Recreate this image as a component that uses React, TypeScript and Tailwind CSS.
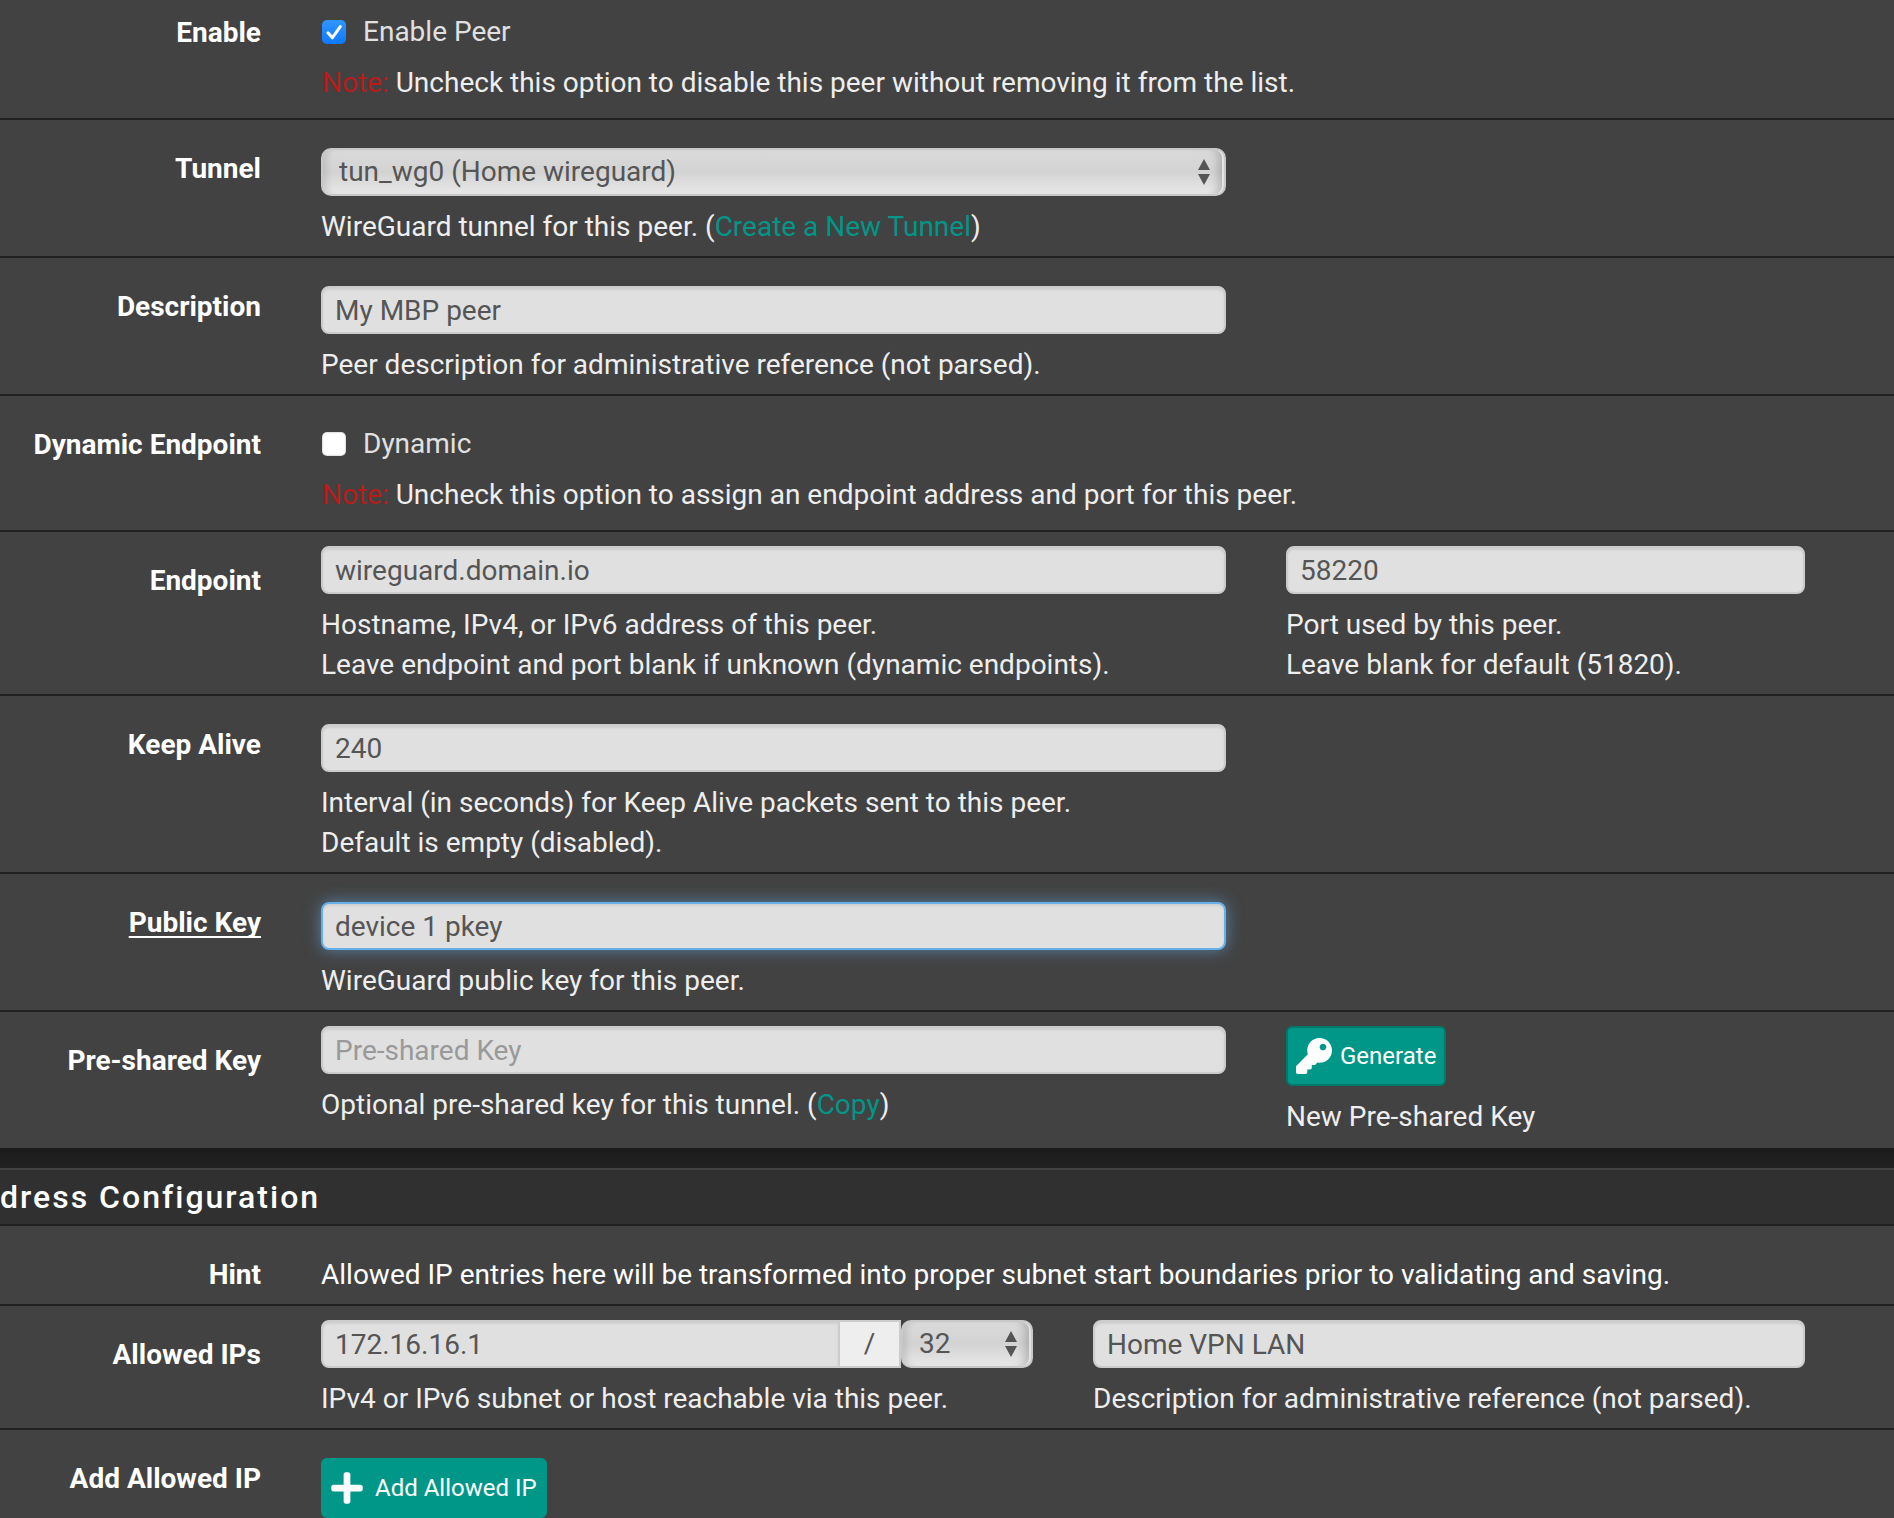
import { useState } from 'react';
import type { ComponentProps, ReactNode } from 'react';
import { clsx } from 'clsx';
import { FaKey, FaPlus } from 'react-icons/fa';

const controlClass =
  'block h-12 w-full min-w-0 rounded-lg border-2 border-[#ccc] bg-[#e0e0e0] px-3 text-[28px] text-[#555] shadow-[inset_0_2px_2px_rgba(0,0,0,0.075)] outline-none placeholder:text-[#999] placeholder:opacity-100';

interface RowProps {
  label: string;
  htmlFor?: string;
  required?: boolean;
  first?: boolean;
  last?: boolean;
  children: ReactNode;
}

function Row({ label, htmlFor, required, first, last, children }: RowProps) {
  return (
    <div
      className={clsx('flex bg-[#424242] pr-[59px]', {
        'border-b-2 border-[#212121]': !last,
      })}
    >
      <div className={clsx('w-[291px] shrink-0 pr-[30px] text-right', first ? 'pt-[13px]' : 'pt-[29px]')}>
        <label
          htmlFor={htmlFor}
          className={clsx('font-bold text-white', {
            'underline decoration-2 underline-offset-4 [text-decoration-skip-ink:none]': required,
          })}
        >
          {label}
        </label>
      </div>
      <div className="grid min-w-0 flex-1 grid-cols-8">{children}</div>
    </div>
  );
}

function Help({ children }: { children: ReactNode }) {
  return <p className="mt-[11px] text-[#eee]">{children}</p>;
}

interface CheckFieldProps {
  id: string;
  label: string;
  note: string;
  initial: boolean;
}

function CheckField({ id, label, note, initial }: CheckFieldProps) {
  const [checked, setChecked] = useState(initial);

  return (
    <div className="pl-px">
      <label className="flex items-center text-[#e0e0e0]">
        <span className="grid size-6 place-items-center">
          <input
            id={id}
            type="checkbox"
            checked={checked}
            onChange={(e) => setChecked(e.target.checked)}
            className="col-start-1 row-start-1 size-6 appearance-none rounded-[5px] bg-white shadow-[inset_0_0_2px_rgba(0,0,0,0.4)] checked:bg-linear-to-b checked:from-[#2f95ff] checked:to-[#0a7aff] checked:shadow-none"
          />
          {checked && (
            <svg viewBox="0 0 24 24" className="pointer-events-none col-start-1 row-start-1 size-6" fill="none">
              <path
                d="M6 12.8 10.3 17.8 18.2 6.6"
                stroke="#fff"
                strokeWidth="3"
                strokeLinecap="round"
                strokeLinejoin="round"
              />
            </svg>
          )}
        </span>
        <span className="ml-[17px]">{label}</span>
      </label>
      <Help>
        <span className="text-[#b71c1c]">Note:</span> {note}
      </Help>
    </div>
  );
}

function Select({ className, children, ...props }: ComponentProps<'select'>) {
  return (
    <div className={clsx('grid', className)}>
      <select
        {...props}
        className="col-start-1 row-start-1 h-12 w-full appearance-none rounded-[10px] border-2 border-[#c8c8c8] bg-linear-to-b from-[#dadada] via-[#d3d3d3] to-[#e8e8e8] pr-10 pl-4 text-[28px] text-[#555] shadow-[inset_-2px_0_0_rgba(232,232,232,0.9),inset_-12px_0_8px_-6px_rgba(0,0,0,0.18),inset_8px_0_6px_-4px_rgba(0,0,0,0.1)] outline-none"
      >
        {children}
      </select>
      <svg
        viewBox="0 0 12 26"
        className="pointer-events-none col-start-1 row-start-1 mr-4 h-[26px] w-3 self-center justify-self-end fill-[#555]"
      >
        <path d="M6 0 12 11H0ZM0 15H12L6 26Z" />
      </svg>
    </div>
  );
}

function ActionButton({ className, children }: { className: string; children: ReactNode }) {
  return (
    <button
      type="button"
      className={clsx(
        'flex h-15 items-center rounded-md border-2 bg-[#009688] px-2 text-2xl whitespace-nowrap text-white',
        className,
      )}
    >
      {children}
    </button>
  );
}

function Link({ children }: { children: ReactNode }) {
  return (
    <a href="#" className="text-[#009688]">
      {children}
    </a>
  );
}

export default function App() {
  return (
    <form
      className="min-h-screen overflow-x-hidden bg-[#424242] font-['Roboto',sans-serif] text-[28px] leading-10"
      onSubmit={(e) => e.preventDefault()}
    >
      <section>
        <Row label="Enable" htmlFor="enabled" first>
          <div className="col-span-8 px-[30px] pt-3 pb-[15px]">
            <CheckField
              id="enabled"
              label="Enable Peer"
              note="Uncheck this option to disable this peer without removing it from the list."
              initial
            />
          </div>
        </Row>
        <Row label="Tunnel" htmlFor="tunnel">
          <div className="col-span-5 px-[30px] pt-7 pb-[9px]">
            <Select id="tunnel">
              <option>tun_wg0 (Home wireguard)</option>
            </Select>
            <Help>
              WireGuard tunnel for this peer. (<Link>Create a New Tunnel</Link>)
            </Help>
          </div>
        </Row>
        <Row label="Description" htmlFor="descr">
          <div className="col-span-5 px-[30px] pt-7 pb-[9px]">
            <input id="descr" type="text" className={controlClass} defaultValue="My MBP peer" />
            <Help>Peer description for administrative reference (not parsed).</Help>
          </div>
        </Row>
        <Row label="Dynamic Endpoint" htmlFor="dynamic">
          <div className="col-span-8 px-[30px] pt-7 pb-[15px]">
            <CheckField
              id="dynamic"
              label="Dynamic"
              note="Uncheck this option to assign an endpoint address and port for this peer."
              initial={false}
            />
          </div>
        </Row>
        <Row label="Endpoint" htmlFor="endpoint">
          <div className="col-span-5 px-[30px] pt-3.5 pb-[9px]">
            <input id="endpoint" type="text" className={controlClass} defaultValue="wireguard.domain.io" />
            <Help>
              Hostname, IPv4, or IPv6 address of this peer.
              <br />
              Leave endpoint and port blank if unknown (dynamic endpoints).
            </Help>
          </div>
          <div className="col-span-3 px-[30px] pt-3.5 pb-[9px]">
            <input type="text" aria-label="Port" className={controlClass} defaultValue="58220" />
            <Help>
              Port used by this peer.
              <br />
              Leave blank for default (51820).
            </Help>
          </div>
        </Row>
        <Row label="Keep Alive" htmlFor="keepalive">
          <div className="col-span-5 px-[30px] pt-7 pb-[9px]">
            <input id="keepalive" type="text" className={controlClass} defaultValue="240" />
            <Help>
              Interval (in seconds) for Keep Alive packets sent to this peer.
              <br />
              Default is empty (disabled).
            </Help>
          </div>
        </Row>
        <Row label="Public Key" htmlFor="publickey" required>
          <div className="col-span-5 px-[30px] pt-7 pb-[9px]">
            <input
              id="publickey"
              type="text"
              className={clsx(
                controlClass,
                'border-[#66afe9]! shadow-[inset_0_2px_2px_rgba(0,0,0,0.075),0_0_16px_rgba(102,175,233,0.6)]!',
              )}
              defaultValue="device 1 pkey"
            />
            <Help>WireGuard public key for this peer.</Help>
          </div>
        </Row>
        <Row label="Pre-shared Key" htmlFor="psk" last>
          <div className="col-span-5 px-[30px] pt-3.5 pb-[11px]">
            <input id="psk" type="text" className={controlClass} placeholder="Pre-shared Key" />
            <Help>
              Optional pre-shared key for this tunnel. (<Link>Copy</Link>)
            </Help>
          </div>
          <div className="col-span-3 px-[30px] pt-3.5 pb-[11px]">
            <ActionButton className="border-[#00796b]">
              <FaKey className="mr-2 size-9" />
              Generate
            </ActionButton>
            <Help>New Pre-shared Key</Help>
          </div>
        </Row>
      </section>

      <div className="h-5 bg-linear-to-b from-[#1b1b1b] to-[#212121]" />

      <section>
        <h2 className="border-t-2 border-b-2 border-t-[#424242] border-b-[#212121] bg-[#303030] py-[7px] text-[32px] font-medium tracking-[2px] text-white">
          dress Configuration
        </h2>
        <Row label="Hint">
          <p className="col-span-8 px-[30px] pt-[29px] pb-[9px] text-white">
            Allowed IP entries here will be transformed into proper subnet start boundaries prior to validating and saving.
          </p>
        </Row>
        <Row label="Allowed IPs" htmlFor="address">
          <div className="col-span-4 px-[30px] pt-3.5 pb-[9px]">
            <div className="flex">
              <input
                id="address"
                type="text"
                className={clsx(controlClass, 'flex-1 rounded-r-none')}
                defaultValue="172.16.16.1"
              />
              <span className="flex h-12 w-[61px] shrink-0 items-center justify-center border-y-2 border-r-2 border-[#ccc] bg-[#eee] text-[#555]">
                /
              </span>
              <Select aria-label="Subnet mask" className="w-[132px] shrink-0">
                <option>32</option>
              </Select>
            </div>
            <Help>IPv4 or IPv6 subnet or host reachable via this peer.</Help>
          </div>
          <div className="col-span-4 px-[30px] pt-3.5 pb-[9px]">
            <input type="text" aria-label="Description" className={controlClass} defaultValue="Home VPN LAN" />
            <Help>Description for administrative reference (not parsed).</Help>
          </div>
        </Row>
        <Row label="Add Allowed IP" last>
          <div className="col-span-8 px-[30px] pt-7">
            <ActionButton className="border-[#009688]">
              <FaPlus className="mr-3 h-9 w-8" />
              Add Allowed IP
            </ActionButton>
          </div>
        </Row>
      </section>
    </form>
  );
}
